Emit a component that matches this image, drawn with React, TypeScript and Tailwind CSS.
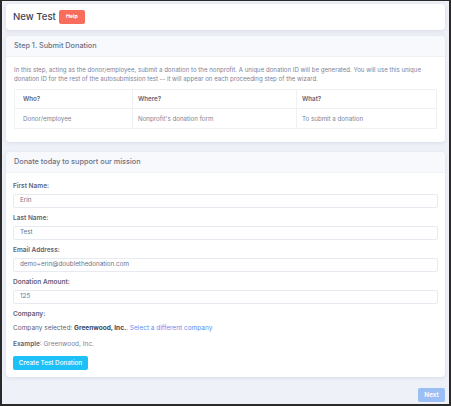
import React from "react";

const fields = [
  { label: "First Name:", value: "Erin" },
  { label: "Last Name:", value: "Test" },
  { label: "Email Address:", value: "demo+erin@doublethedonation.com" },
  { label: "Donation Amount:", value: "125" },
];

function Card({ title, children }: { title: string; children: React.ReactNode }) {
  return (
    <div className="rounded-[4px] bg-white shadow-[0_1px_4px_rgba(82,63,105,0.12)]">
      <div className="flex h-[21px] items-center rounded-t-[4px] border-b border-[#f1f2f6] bg-[#f8f9fc] px-[8px] text-[7.3px] font-medium text-[#6e7285]">
        {title}
      </div>
      {children}
    </div>
  );
}

export default function App() {
  return (
    <div
      className="flex h-[406px] w-[451px] flex-col border-b-2 border-l-2 border-r-2 border-t border-[#2a2a2a] bg-[#eef1f8] px-[4px] pt-[3px] text-[#3f4254]"
      style={{ fontFamily: "Inter, 'Noto Sans', sans-serif" }}
    >
      <div className="flex h-[26px] items-center gap-[3px] rounded-[4px] bg-white px-[7px] shadow-[0_1px_4px_rgba(82,63,105,0.14)]">
        <span className="text-[9.6px] font-medium text-[#3f4254]">New Test</span>
        <span className="flex h-[14px] w-[26px] items-center justify-center rounded-[2px] bg-[#f86c5c] text-[5.3px] font-bold text-white">
          Help
        </span>
      </div>

      <div className="mt-[6px]">
        <Card title="Step 1. Submit Donation">
          <div className="px-[8px] pb-[13px] pt-[8px]">
            <p className="text-[6.1px] leading-[9px] text-[#7e8299]">
              In this step, acting as the donor/employee, submit a donation to the nonprofit. A unique donation ID will be generated. You will use this unique donation ID for the rest of the autosubmission test -- it will appear on each proceeding step of the wizard.
            </p>
            <div className="mt-[6px] grid grid-cols-[118px_164px_1fr] border border-[#eff1f5] text-[6.2px]">
              <div className="flex h-[19px] items-center border-b border-r border-[#eff1f5] px-[8px] font-semibold text-[#5e6278]">Who?</div>
              <div className="flex h-[19px] items-center border-b border-r border-[#eff1f5] px-[5px] font-semibold text-[#5e6278]">Where?</div>
              <div className="flex h-[19px] items-center border-b border-[#eff1f5] px-[5px] font-semibold text-[#5e6278]">What?</div>
              <div className="flex h-[19px] items-center border-r border-[#eff1f5] px-[8px] text-[#7e8299]">Donor/employee</div>
              <div className="flex h-[19px] items-center border-r border-[#eff1f5] px-[5px] text-[#7e8299]">Nonprofit's donation form</div>
              <div className="flex h-[19px] items-center px-[5px] text-[#7e8299]">To submit a donation</div>
            </div>
          </div>
        </Card>
      </div>

      <div className="mt-[10px]">
        <Card title="Donate today to support our mission">
          <div className="px-[7px] pb-[7px] pt-[8px]">
            {fields.map((f) => (
              <div key={f.label} className="mb-[5px]">
                <div className="h-[10px] text-[6.5px] font-semibold leading-[10px] text-[#5e6278]">{f.label}</div>
                <div className="mt-[3px] flex h-[14px] items-center rounded-[2px] border border-[#e8eaf1] px-[6px] text-[6.3px] text-[#6c7086]">
                  {f.value}
                </div>
              </div>
            ))}
            <div className="mt-[6px] text-[6.5px] font-semibold text-[#5e6278]">Company:</div>
            <div className="mt-[4px] text-[6.5px] text-[#5e6278]">
              Company selected: <span className="font-bold text-[#3f4254]">Greenwood, Inc.</span>.{" "}
              <span className="text-[#5d8ff0]">Select a different company</span>
            </div>
            <div className="mt-[6px] text-[6.5px] text-[#7e8299]">
              <span className="font-semibold text-[#5e6278]">Example</span>: Greenwood, Inc.
            </div>
            <div className="mt-[7px] flex h-[14px] w-[75px] items-center justify-center rounded-[2px] bg-[#1ec0f8] text-[6.3px] font-medium text-white">
              Create Test Donation
            </div>
          </div>
        </Card>
      </div>

      <div className="mt-[11px] flex justify-end">
        <div className="flex h-[14px] w-[27px] items-center justify-center rounded-[2px] bg-[#9bbff5] text-[6.3px] font-semibold text-white">
          Next
        </div>
      </div>
    </div>
  );
}
